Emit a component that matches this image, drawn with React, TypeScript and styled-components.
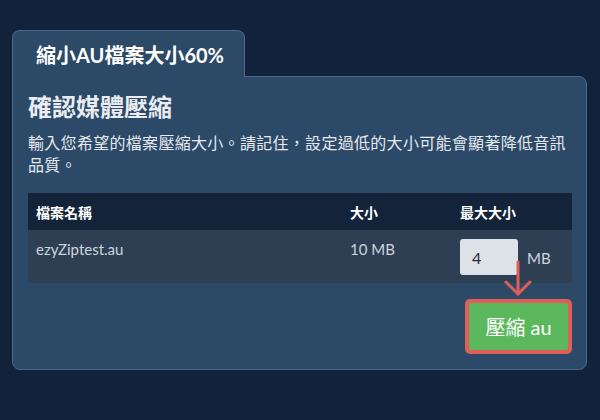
import React from 'react';
import styled, { createGlobalStyle } from 'styled-components';

const GlobalStyle = createGlobalStyle`
  html, body {
    margin: 0;
    padding: 0;
    background: #11233a;
  }
  body {
    font-family: 'Lato', 'Noto Sans CJK TC', sans-serif;
  }
`;

const Page = styled.div`
  width: 600px;
  height: 420px;
  box-sizing: border-box;
  padding: 30px 13px 0 12px;
  background: #11233a;
`;

const Tab = styled.div`
  position: relative;
  z-index: 1;
  width: 233px;
  height: 47px;
  box-sizing: border-box;
  margin-bottom: -1px;
  padding-left: 23px;
  display: flex;
  align-items: center;
  background: #2c4968;
  border: 1px solid #4b6888;
  border-bottom: none;
  border-radius: 8px 8px 0 0;
  color: #ffffff;
  font-size: 20px;
  font-weight: 700;
`;

const Panel = styled.div`
  position: relative;
  box-sizing: border-box;
  padding: 15px 14px 15px 15px;
  background: #2c4968;
  border: 1px solid #4b6888;
  border-radius: 0 8px 8px 8px;
`;

const Title = styled.h2`
  margin: 0;
  font-size: 24px;
  line-height: 30px;
  font-weight: 700;
  color: #e9edf2;
`;

const Lead = styled.p`
  margin: 10px 0 17px;
  font-size: 16px;
  line-height: 22px;
  letter-spacing: 0.3px;
  color: #e6eaef;
`;

const Table = styled.div`
  display: grid;
  grid-template-columns: 314px 110px 1fr;
`;

const HeadCell = styled.div`
  height: 37px;
  display: flex;
  align-items: center;
  padding-left: 8px;
  background: #12233a;
  color: #ffffff;
  font-size: 14px;
  font-weight: 700;
`;

const Cell = styled.div`
  height: 53px;
  box-sizing: border-box;
  padding: 9px 0 0 8px;
  background: #2e3f53;
  color: #cdd4dd;
  font-size: 15px;
  line-height: 20px;
`;

const SizeCell = styled(Cell)`
  display: flex;
  align-items: flex-start;
  gap: 9px;
  padding-top: 9px;
`;

const SizeInput = styled.input`
  width: 58px;
  height: 36px;
  box-sizing: border-box;
  padding: 0 12px;
  border: none;
  border-radius: 3px;
  background: #dde1e8;
  color: #1f2a37;
  font-family: 'Lato', sans-serif;
  font-size: 16px;
  outline: none;
`;

const Unit = styled.span`
  margin-top: 9px;
  color: #cdd4dd;
  font-size: 15px;
`;

const Actions = styled.div`
  display: flex;
  justify-content: flex-end;
  margin-top: 16px;
`;

const Highlight = styled.div`
  padding: 4px;
  background: #df5e59;
  border-radius: 5px;
`;

const CompressButton = styled.button`
  width: 99px;
  height: 47px;
  border: none;
  border-radius: 2px;
  background: #5cb85c;
  color: #ffffff;
  font-family: 'Lato', 'Noto Sans CJK TC', sans-serif;
  font-size: 20px;
  cursor: pointer;
`;

const Pointer = styled.svg`
  position: absolute;
  left: 487px;
  top: 181px;
`;

export default function App() {
  return (
    <>
      <GlobalStyle />
      <Page>
        <Tab>縮小AU檔案大小60%</Tab>
        <Panel>
          <Title>確認媒體壓縮</Title>
          <Lead>輸入您希望的檔案壓縮大小。請記住，設定過低的大小可能會顯著降低音訊品質。</Lead>
          <Table>
            <HeadCell>檔案名稱</HeadCell>
            <HeadCell>大小</HeadCell>
            <HeadCell>最大大小</HeadCell>
            <Cell>ezyZiptest.au</Cell>
            <Cell>10 MB</Cell>
            <SizeCell>
              <SizeInput defaultValue="4" />
              <Unit>MB</Unit>
            </SizeCell>
          </Table>
          <Actions>
            <Highlight>
              <CompressButton>壓縮 au</CompressButton>
            </Highlight>
          </Actions>
          <Pointer width="40" height="40" viewBox="0 0 40 40">
            <g fill="none" stroke="#df5e59" strokeWidth="3" strokeLinecap="round" strokeLinejoin="round">
              <line x1="18" y1="4" x2="18" y2="36" />
              <polyline points="6,24 18,36 30,24" />
            </g>
          </Pointer>
        </Panel>
      </Page>
    </>
  );
}
